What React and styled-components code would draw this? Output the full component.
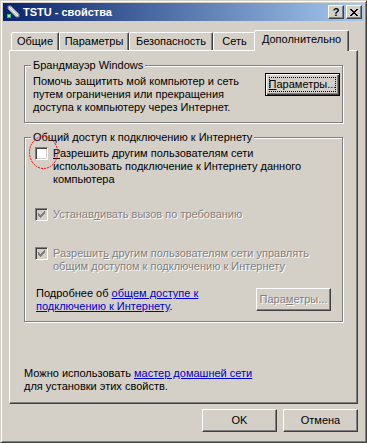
import React from 'react'
import styled, { createGlobalStyle, css } from 'styled-components'

const colors = {
  face: '#d4d0c8',
  light: '#ffffff',
  shadow: '#808080',
  dark: '#404040',
  text: '#000000',
  link: '#0000cc',
}

const GlobalStyle = createGlobalStyle`
  html, body { margin: 0; padding: 0; background: ${colors.face}; }
  body {
    font-family: "Liberation Sans", Arial, sans-serif;
    font-size: 11px;
    line-height: 13px;
    color: ${colors.text};
  }
`

const Window = styled.div`
  position: relative;
  box-sizing: border-box;
  width: 367px;
  height: 443px;
  padding: 2px;
  background: ${colors.face};
  border: 1px solid;
  border-color: ${colors.face} ${colors.dark} ${colors.dark} ${colors.face};
  box-shadow: inset 1px 1px ${colors.light}, inset -1px -1px ${colors.shadow};
  display: flex;
  flex-direction: column;
`

const TitleBar = styled.div`
  height: 18px;
  flex: none;
  display: flex;
  align-items: center;
  padding: 0 2px;
  background: linear-gradient(to right, #0a246a, #a6caf0);
`

const TitleIcon = styled.svg`
  flex: none;
  margin-right: 2px;
`

const Title = styled.span`
  flex: 1;
  color: #fff;
  font-weight: bold;
  font-size: 11px;
  white-space: nowrap;
`

const CaptionButton = styled.div`
  box-sizing: border-box;
  width: 16px;
  height: 14px;
  margin-left: ${p => p.$gap || 0}px;
  background: ${colors.face};
  border: 1px solid;
  border-color: ${colors.light} ${colors.dark} ${colors.dark} ${colors.light};
  box-shadow: inset -1px -1px ${colors.shadow};
  display: flex;
  align-items: center;
  justify-content: center;
  font-weight: bold;
  font-size: 11px;
  line-height: 1;
`

const Body = styled.div`
  padding: 9px 6px 0;
  display: flex;
  flex-direction: column;
`

const TabRow = styled.div`
  position: relative;
  z-index: 1;
  height: 20px;
  padding-left: 2px;
  display: flex;
  align-items: flex-end;
`

const Tab = styled.div`
  box-sizing: border-box;
  width: ${p => p.$w}px;
  height: 18px;
  display: flex;
  align-items: center;
  justify-content: center;
  background: ${colors.face};
  border: 1px solid;
  border-bottom: none;
  border-color: ${colors.light} ${colors.dark} transparent ${colors.light};
  border-radius: 2px 2px 0 0;
  box-shadow: inset -1px 0 ${colors.shadow};
  white-space: nowrap;
  ${p => p.$active && css`
    width: ${p.$w + 4}px;
    height: 21px;
    margin: 0 -2px -1px;
    padding-bottom: 3px;
  `}
`

const Panel = styled.div`
  box-sizing: border-box;
  height: 354px;
  padding: 8px 14px 0;
  border: 1px solid;
  border-color: ${colors.light} ${colors.dark} ${colors.dark} ${colors.light};
  box-shadow: inset -1px -1px ${colors.shadow};
  display: flex;
  flex-direction: column;
`

const Group = styled.fieldset`
  margin: ${p => p.$mt || 0}px 0 0;
  padding: ${p => p.$pt}px 0 8px 8px;
  min-width: 0;
  border: 1px solid ${colors.shadow};
  box-shadow: inset 1px 1px ${colors.light}, 1px 1px ${colors.light};
`

const Legend = styled.legend`
  padding: 0 2px;
  margin-left: -2px;
  line-height: 13px;
  background: ${colors.face};
`

const Row = styled.div`
  display: flex;
  align-items: flex-start;
  margin-top: ${p => p.$mt || 0}px;
`

const Text = styled.div`
  flex: 1;
  margin-top: ${p => p.$mt || 0}px;
  margin-left: ${p => p.$ml || 0}px;
  white-space: nowrap;
  ${p => p.$disabled && css`
    color: ${colors.shadow};
    text-shadow: 1px 1px ${colors.light};
  `}
`

const PushButton = styled.div`
  position: relative;
  box-sizing: border-box;
  flex: none;
  width: 75px;
  height: 23px;
  margin-top: ${p => p.$mt || 0}px;
  margin-right: ${p => p.$mr || 0}px;
  display: flex;
  align-items: center;
  justify-content: center;
  background: ${colors.face};
  border: 1px solid;
  border-color: ${colors.light} ${colors.dark} ${colors.dark} ${colors.light};
  box-shadow: inset -1px -1px ${colors.shadow};
  white-space: nowrap;
  ${p => p.$disabled && css`
    color: ${colors.shadow};
    text-shadow: 1px 1px ${colors.light};
  `}
  ${p => p.$default && css`
    border-color: #000;
    box-shadow: inset 1px 1px ${colors.light}, inset -1px -1px ${colors.dark}, inset -2px -2px ${colors.shadow};
    &::after {
      content: '';
      position: absolute;
      inset: 3px;
      border: 1px dotted #000;
    }
  `}
`

const ButtonRow = styled.div`
  margin-top: 5px;
  display: flex;
  justify-content: flex-end;
  gap: 6px;
`

const Box = styled.span`
  position: relative;
  box-sizing: border-box;
  flex: none;
  width: 13px;
  height: 13px;
  margin: 0 5px 0 2px;
  background: ${p => (p.$disabled ? colors.face : '#fff')};
  border: 1px solid;
  border-color: ${colors.shadow} ${colors.light} ${colors.light} ${colors.shadow};
  box-shadow: inset 1px 1px ${colors.dark}, inset -1px -1px ${colors.face};
  display: flex;
  align-items: center;
  justify-content: center;
`

const Mark = styled.svg`
  position: absolute;
  left: -8px;
  top: -13px;
  pointer-events: none;
`

const Key = styled.span`
  text-decoration: underline;
`

const Link = styled.span`
  color: ${colors.link};
  text-decoration: underline;
`

const BottomNote = styled.div`
  margin-top: 45px;
`

const CHECK = 'M6 0h1v1h-1zM5 1h2v1h-2zM0 2h1v1h-1zM4 2h3v1h-3zM0 3h2v1h-2zM3 3h3v1h-3zM0 4h5v1h-5zM1 5h3v1h-3zM2 6h1v1h-1z'
const CLOSE = 'M0 0h2v1h-2zM6 0h2v1h-2zM1 1h2v1h-2zM5 1h2v1h-2zM2 2h4v1h-4zM3 3h2v1h-2zM2 4h4v1h-4zM1 5h2v1h-2zM5 5h2v1h-2zM0 6h2v1h-2zM6 6h2v1h-2z'

const Checkbox = ({ checked, disabled, marked }) => (
  <Box $disabled={disabled}>
    {checked && (
      <svg width="7" height="7" viewBox="0 0 7 7" shapeRendering="crispEdges">
        <path d={CHECK} fill={disabled ? colors.shadow : '#000'} />
      </svg>
    )}
    {marked && (
      <Mark width="32" height="36" viewBox="0 0 32 36">
        <ellipse cx="15.5" cy="17.5" rx="14" ry="16" fill="none" stroke="#ff0000" strokeWidth="1" strokeDasharray="2 1" />
      </Mark>
    )}
  </Box>
)

const tabs = [
  { label: 'Общие', w: 48 },
  { label: 'Параметры', w: 70 },
  { label: 'Безопасность', w: 84 },
  { label: 'Сеть', w: 43 },
  { label: 'Дополнительно', w: 91, active: true },
]

const App = () => (
  <Window>
    <GlobalStyle />
    <TitleBar>
      <TitleIcon width="16" height="16" viewBox="0 0 16 16">
        <path d="M3 2 L6 2 L14 10 L14 13 L11 13 L3 5 Z" fill="#c8c8c8" stroke="#7a7a8a" strokeWidth="1" />
        <path d="M4 3 L13 12" stroke="#ffffff" strokeWidth="1" />
        <rect x="2" y="10" width="4" height="4" fill="#22c060" />
        <rect x="3" y="11" width="2" height="2" fill="#9ef0c0" />
      </TitleIcon>
      <Title>TSTU - свойства</Title>
      <CaptionButton>?</CaptionButton>
      <CaptionButton $gap={2}>
        <svg width="8" height="7" viewBox="0 0 8 7" shapeRendering="crispEdges">
          <path d={CLOSE} fill="#000" />
        </svg>
      </CaptionButton>
    </TitleBar>
    <Body>
      <TabRow>
        {tabs.map(t => (
          <Tab key={t.label} $w={t.w} $active={t.active}>{t.label}</Tab>
        ))}
      </TabRow>
      <Panel>
        <Group $pt={1}>
          <Legend>Брандмауэр Windows</Legend>
          <Row>
            <Text $mt={2}>
              Помочь защитить мой компьютер и сеть<br />
              путем ограничения или прекращения<br />
              доступа к компьютеру через Интернет.
            </Text>
            <PushButton $default $mr={2}><Key>П</Key>араметры...</PushButton>
          </Row>
        </Group>
        <Group $mt={8} $pt={3}>
          <Legend>Общий доступ к подключению к Интернету</Legend>
          <Row>
            <Checkbox marked />
            <Text>
              <Key>Р</Key>азрешить другим пользователям сети<br />
              использовать подключение к Интернету данного<br />
              компьютера
            </Text>
          </Row>
          <Row $mt={22}>
            <Checkbox checked disabled />
            <Text $disabled>Устанав<Key>л</Key>ивать вызов по требованию</Text>
          </Row>
          <Row $mt={26}>
            <Checkbox checked disabled />
            <Text $disabled>
              Разрешит<Key>ь</Key> другим пользователям сети управлять<br />
              общим доступом к подключению к Интернету
            </Text>
          </Row>
          <Row $mt={14}>
            <Text $ml={3}>
              Подробнее об <Link>общем доступе к</Link><br />
              <Link>подключению к Интернету</Link>.
            </Text>
            <PushButton $disabled $mt={1} $mr={11}>Пара<Key>м</Key>етры...</PushButton>
          </Row>
        </Group>
        <BottomNote>
          Можно использовать <Link>мастер домашней сети</Link><br />
          для установки этих свойств.
        </BottomNote>
      </Panel>
      <ButtonRow>
        <PushButton>OK</PushButton>
        <PushButton>Отмена</PushButton>
      </ButtonRow>
    </Body>
  </Window>
)

export default App
